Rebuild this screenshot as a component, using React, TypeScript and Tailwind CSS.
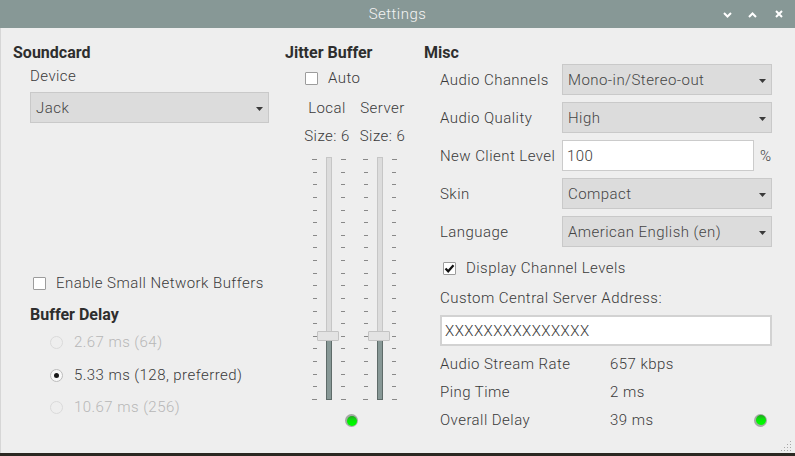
import React from "react";

function Arrow() {
  return (
    <svg width="7" height="4" viewBox="0 0 7 4" className="mt-[3px]">
      <path d="M0 0H7L3.5 4Z" fill="#3a3a3a" />
    </svg>
  );
}

function Combo({ value, className }: { value: string; className: string }) {
  return (
    <div
      className={
        "flex items-center justify-between h-[31px] bg-[#dcdcdc] border border-[#c9c9c9] pl-[5px] pr-[5px] text-[#454545] " +
        className
      }
    >
      <span className="leading-[18px] h-[19px] pt-[1px]">{value}</span>
      <Arrow />
    </div>
  );
}

function Checkbox({ checked }: { checked?: boolean }) {
  return (
    <span className="w-[13px] h-[13px] bg-white border border-[#9c9c9c] rounded-[1px] flex items-center justify-center shrink-0">
      {checked && (
        <svg width="11" height="11" viewBox="0 0 11 11">
          <path d="M1.5 5.5L4.2 8.3L9.5 2.2" fill="none" stroke="#111" strokeWidth="2.2" />
        </svg>
      )}
    </span>
  );
}

function Radio({ checked, disabled }: { checked?: boolean; disabled?: boolean }) {
  return (
    <span
      className={
        disabled
          ? "w-[13px] h-[13px] rounded-full border border-[#dadada] bg-[#eeeeee] flex items-center justify-center shrink-0"
          : "w-[13px] h-[13px] rounded-full border border-[#bcbcbc] bg-[#f8f8f8] flex items-center justify-center shrink-0"
      }
    >
      {checked && <span className="w-[5px] h-[5px] rounded-full bg-[#1a1a1a]" />}
    </span>
  );
}

function Led() {
  return (
    <div className="w-[13px] h-[13px] rounded-full bg-[#a3aaa3] p-[1.5px] shrink-0">
      <div className="w-full h-full rounded-full bg-gradient-to-b from-[#1ca81c] via-[#00ee00] to-[#00ff00]" />
    </div>
  );
}

function Slider() {
  const ticks = Array.from({ length: 20 });
  return (
    <div className="flex h-[243px] gap-[9px]">
      <div className="flex flex-col justify-between items-end w-[5px] pt-[2px]">
        {ticks.map((_, i) => (
          <div key={i} className={i === 0 || i === 19 ? "h-px w-[5px] bg-[#888888]" : "h-px w-[4px] bg-[#888888]"} />
        ))}
      </div>
      <div className="relative w-[6px] h-full border border-[#c6c6c6] bg-[#dcdcdc]">
        <div className="absolute -left-px -right-px bottom-[-1px] h-[60px] bg-[#879896] border border-[#5e6b69]" />
        <div className="absolute top-[173px] -left-[10px] w-[22px] h-[10px] bg-[#e3e3e3] border border-[#c3c3c3] rounded-[1px]" />
      </div>
      <div className="flex flex-col justify-between items-start w-[5px] pt-[2px]">
        {ticks.map((_, i) => (
          <div key={i} className={i === 0 || i === 19 ? "h-px w-[5px] bg-[#888888]" : "h-px w-[4px] bg-[#888888]"} />
        ))}
      </div>
    </div>
  );
}

function ResizeGrip() {
  const dots: [number, number][] = [];
  for (let i = 0; i < 4; i++) for (let j = 0; j < 4; j++) if (i + j >= 3) dots.push([i * 3, j * 3]);
  return (
    <svg width="12" height="12" viewBox="0 0 12 12" className="absolute right-[3px] bottom-[1px]">
      {dots.map(([x, y], k) => (
        <rect key={k} x={x + 1} y={y + 1} width="1" height="1" fill="#a8a8a8" />
      ))}
    </svg>
  );
}

const H = "h-[20px] leading-[20px] text-[16px] font-bold tracking-normal text-[#2e2e2e]";
const L = "w-[122px] h-[19px] pt-[1px] leading-[18px]";

export default function App() {
  return (
    <div className="w-[795px] h-[456px] flex flex-col overflow-hidden bg-[#eeeeee] font-[Roboto,'Liberation_Sans',sans-serif] text-[15px] font-light tracking-[0.45px] text-[#3a3a3a]">
      {/* Title bar */}
      <div className="h-[28px] shrink-0 bg-[#879896] grid grid-cols-[1fr_auto_1fr] items-center">
        <div />
        <div className="text-[15px] font-light text-[#f4f4f4] leading-[28px]">Settings</div>
        <div className="flex items-center justify-end pr-[12px] gap-[16px]">
          <svg width="9" height="6" viewBox="0 0 9 6" className="mt-[1px]">
            <polyline points="1,1 4.5,4.5 8,1" fill="none" stroke="#ffffff" strokeWidth="2" />
          </svg>
          <svg width="9" height="6" viewBox="0 0 9 6" className="mt-[1px]">
            <polyline points="1,5 4.5,1.5 8,5" fill="none" stroke="#ffffff" strokeWidth="2" />
          </svg>
          <svg width="8" height="8" viewBox="0 0 8 8" className="ml-[2px]">
            <path d="M1 1L7 7M7 1L1 7" stroke="#ffffff" strokeWidth="2" />
          </svg>
        </div>
      </div>

      {/* Body */}
      <div className="relative flex-1 flex pt-[15px] pl-[12px] border-l border-[#d6d6d6]">
        {/* Soundcard column */}
        <div className="w-[272px] flex flex-col">
          <div className={H}>Soundcard</div>
          <div className="ml-[17px] mt-[4px] h-[18px] leading-[18px]">Device</div>
          <Combo value="Jack" className="ml-[17px] mt-[7px] w-[239px]" />
          <div className="ml-[20px] mt-[151px] h-[18px] flex items-center gap-[10px] leading-[18px]">
            <Checkbox />
            <span>Enable Small Network Buffers</span>
          </div>
          <div className={"ml-[17px] mt-[13px] " + H}>Buffer Delay</div>
          <div className="ml-[37px] mt-[8px] h-[18px] flex items-center gap-[11px] leading-[18px] text-[#b7b7b7]">
            <Radio disabled />
            <span>2.67 ms (64)</span>
          </div>
          <div className="ml-[37px] mt-[15px] h-[18px] flex items-center gap-[11px] leading-[18px]">
            <Radio checked />
            <span>5.33 ms (128, preferred)</span>
          </div>
          <div className="ml-[37px] mt-[14px] h-[18px] flex items-center gap-[11px] leading-[18px] text-[#b7b7b7]">
            <Radio disabled />
            <span>10.67 ms (256)</span>
          </div>
        </div>

        {/* Jitter buffer column */}
        <div className="w-[139px] flex flex-col">
          <div className={H}>Jitter Buffer</div>
          <div className="ml-[20px] mt-[6px] h-[18px] flex items-center gap-[10px] leading-[18px]">
            <Checkbox />
            <span>Auto</span>
          </div>
          <div className="mt-[12px] h-[18px] flex leading-[18px]">
            <span className="ml-[17px] w-[50px] text-center">Local</span>
            <span className="ml-[5px] w-[51px] text-center">Server</span>
          </div>
          <div className="mt-[10px] h-[18px] flex leading-[18px]">
            <span className="ml-[17px] w-[50px] text-center">Size: 6</span>
            <span className="ml-[5px] w-[51px] text-center">Size: 6</span>
          </div>
          <div className="ml-[27px] mt-[12px] flex gap-[17px]">
            <Slider />
            <Slider />
          </div>
          <div className="ml-[60px] mt-[14px]">
            <Led />
          </div>
        </div>

        {/* Misc column */}
        <div className="w-[356px] flex flex-col">
          <div className={H}>Misc</div>
          <div className="mt-[1px] flex flex-col gap-[7px] pl-[16px]">
            <div className="flex items-center h-[31px]">
              <span className={L}>Audio Channels</span>
              <Combo value="Mono-in/Stereo-out" className="w-[210px]" />
            </div>
            <div className="flex items-center h-[31px]">
              <span className={L}>Audio Quality</span>
              <Combo value="High" className="w-[210px]" />
            </div>
            <div className="flex items-center h-[31px]">
              <span className={L}>New Client Level</span>
              <div className="w-[192px] h-[31px] bg-white border border-[#cbcbcb] pl-[4px] flex items-center">
                <span className="h-[19px] pt-[1px] leading-[18px]">100</span>
              </div>
              <span className="ml-[6px] h-[19px] pt-[1px] leading-[18px]">%</span>
            </div>
            <div className="flex items-center h-[31px]">
              <span className={L}>Skin</span>
              <Combo value="Compact" className="w-[210px]" />
            </div>
            <div className="flex items-center h-[31px]">
              <span className={L}>Language</span>
              <Combo value="American English (en)" className="w-[210px]" />
            </div>
          </div>
          <div className="ml-[19px] mt-[12px] h-[18px] flex items-center gap-[10px] leading-[18px]">
            <Checkbox checked />
            <span>Display Channel Levels</span>
          </div>
          <div className="ml-[16px] mt-[12px] h-[18px] leading-[18px]">Custom Central Server Address:</div>
          <div className="ml-[16px] mt-[8px] w-[332px] h-[31px] bg-white border-2 border-[#d2d2d2] pl-[3px] flex items-center">
            <span className="h-[19px] pt-[1px] leading-[18px]">XXXXXXXXXXXXXXX</span>
          </div>
          <div className="ml-[16px] mt-[9px] w-[332px] h-[18px] flex items-center leading-[18px]">
            <span className="w-[170px]">Audio Stream Rate</span>
            <span>657 kbps</span>
          </div>
          <div className="ml-[16px] mt-[10px] w-[332px] h-[18px] flex items-center leading-[18px]">
            <span className="w-[170px]">Ping Time</span>
            <span>2 ms</span>
          </div>
          <div className="ml-[16px] mt-[10px] w-[332px] h-[18px] flex items-center leading-[18px]">
            <span className="w-[170px]">Overall Delay</span>
            <span>39 ms</span>
            <div className="ml-auto mr-[5px]">
              <Led />
            </div>
          </div>
        </div>
        <ResizeGrip />
      </div>
      <div className="h-[3px] shrink-0 bg-[#2b2822]" />
    </div>
  );
}
